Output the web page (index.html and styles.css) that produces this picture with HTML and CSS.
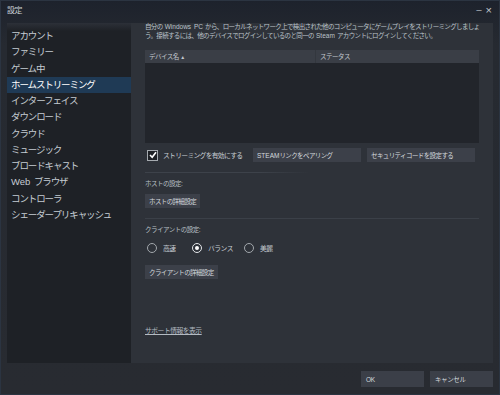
FILE: index.html
```html
<!DOCTYPE html>
<html>
<head>
  <meta charset="utf-8">
  <link rel="stylesheet" href="styles.css">
</head>
<body>
  <div class="window">
    <div class="titlebar">
      <span class="title">設定</span>
      <div class="win-controls">
        <span class="win-min">_</span>
        <span class="win-close">×</span>
      </div>
    </div>

    <div class="main">
      <ul class="nav">
        <li>アカウント</li>
        <li>ファミリー</li>
        <li>ゲーム中</li>
        <li class="active">ホームストリーミング</li>
        <li>インターフェイス</li>
        <li>ダウンロード</li>
        <li>クラウド</li>
        <li>ミュージック</li>
        <li>ブロードキャスト</li>
        <li><span class="latin">Web</span> ブラウザ</li>
        <li>コントローラ</li>
        <li>シェーダープリキャッシュ</li>
      </ul>

      <div class="panel">
        <p class="intro">自分の <span class="latin">Windows PC</span> から、ローカルネットワーク上で検出された他のコンピュータにゲームプレイをストリーミングしましょ<br>う。接続するには、他のデバイスでログインしているのと同一の <span class="latin">Steam</span> アカウントにログインしてください。</p>

        <div class="device-table">
          <div class="table-head">
            <div class="col-name">デバイス名 <span class="sort">▲</span></div>
            <div class="col-status">ステータス</div>
          </div>
          <div class="table-body"></div>
        </div>

        <div class="stream-row">
          <label class="check">
            <span class="check-box">
              <svg width="8" height="8" viewBox="0 0 8 8"><polyline points="1,4 3.2,6.3 7,1.2" fill="none" stroke="#ffffff" stroke-width="1.6"/></svg>
            </span>
            ストリーミングを有効にする
          </label>
          <button class="btn btn-wide"><span class="latin">STEAM</span>リンクをペアリング</button>
          <button class="btn btn-wide">セキュリティコードを設定する</button>
        </div>

        <div class="sep sep-short"></div>
        <div class="section-label">ホストの設定:</div>
        <button class="btn">ホストの詳細設定</button>

        <div class="sep"></div>
        <div class="section-label">クライアントの設定:</div>
        <div class="radios">
          <span class="radio radio-fast"><span class="dot"></span>高速</span>
          <span class="radio radio-balance selected"><span class="dot"></span>バランス</span>
          <span class="radio"><span class="dot"></span>美麗</span>
        </div>
        <button class="btn btn-client">クライアントの詳細設定</button>

        <a class="support">サポート情報を表示</a>
      </div>
    </div>

    <div class="footer">
      <button class="btn-dialog">OK</button>
      <button class="btn-dialog">キャンセル</button>
    </div>
  </div>
</body>
</html>
```

FILE: styles.css
```css
/* ventana de ajustes */
body {
  margin: 0;
  background: #23262c;
  font-family: "Liberation Sans", "Noto Sans CJK JP", sans-serif;
}

.window {
  width: 500px;
  height: 395px;
  box-sizing: border-box;
  background: linear-gradient(to bottom, #1d222c 0px, #262a31 45px, #282b31 100%);
  box-shadow: inset 0 0 0 1px #2b3441;
  display: flex;
  flex-direction: column;
}

/* texto latino sin el espaciado negativo de los kana */
.latin {
  letter-spacing: 0;
}

.titlebar {
  height: 23px;
  display: flex;
  align-items: flex-start;
  justify-content: space-between;
  padding: 0 8px 0 7px;
}

.title {
  font-size: 8px;
  line-height: 21px;
  color: #c9cfd5;
  letter-spacing: -0.5px;
}

.win-controls {
  display: flex;
  gap: 4px;
  color: #c3c9cf;
  line-height: 20px;
}

.win-min {
  font-size: 9px;
  margin-top: -4px;
}

.win-close {
  font-size: 11px;
}

.main {
  display: flex;
  height: 340px;
  padding: 0 7px;
}

/* menú lateral */
.nav {
  width: 124px;
  margin: 0;
  padding: 5px 0 0;
  list-style: none;
  background: linear-gradient(to bottom, #2c3038 0px, #1e2126 8px, #1e2126 100%);
}

.nav li {
  height: 16.25px;
  line-height: 16.25px;
  padding-left: 4px;
  font-size: 9.5px;
  letter-spacing: -1.1px;
  word-spacing: 2px;
  color: #c5ccd3;
  white-space: nowrap;
}

.nav li.active {
  background: #1f3a55;
  color: #ffffff;
}

/* panel derecho */
.panel {
  width: 362px;
  box-sizing: border-box;
  padding: 0 14px;
  background: #2e3239;
  display: flex;
  flex-direction: column;
  align-items: flex-start;
}

.intro {
  margin: -1px 0 0;
  font-size: 6.5px;
  line-height: 9px;
  letter-spacing: -0.65px;
  word-spacing: 1px;
  color: #bcc3ca;
  white-space: nowrap;
}

.device-table {
  width: 334px;
  margin-top: 10px;
}

.table-head {
  height: 13px;
  display: flex;
  background: #3a3e46;
  font-size: 6.5px;
  line-height: 13px;
  letter-spacing: -0.5px;
  color: #c2c8ce;
}

.col-name {
  width: 166px;
  padding-left: 4px;
  border-right: 1px solid #33373e;
}

.col-status {
  padding-left: 4px;
}

.sort {
  font-size: 5px;
}

.table-body {
  height: 80px;
  background: #22252b;
}

.stream-row {
  margin-top: 5px;
  display: flex;
  align-items: center;
  gap: 6px;
}

.check {
  width: 100px;
  margin-left: 2px;
  display: flex;
  align-items: center;
  gap: 5px;
  font-size: 6.8px;
  letter-spacing: -0.7px;
  color: #c7cdd3;
  white-space: nowrap;
}

.check-box {
  width: 9px;
  height: 9px;
  flex-shrink: 0;
  border: 1px solid #a6abb0;
  background: #1e2126;
  display: flex;
  align-items: center;
  justify-content: center;
}

.btn {
  height: 14px;
  padding: 0 4px;
  border: none;
  background: #3c4049;
  color: #d4d9de;
  font-family: inherit;
  font-size: 6.5px;
  letter-spacing: -0.6px;
  text-align: left;
  white-space: nowrap;
}

.btn-wide {
  width: 108px;
}

.sep {
  width: 334px;
  height: 1px;
  margin-top: 10px;
  background: #3b4048;
}

.sep-short {
  width: 165px;
  background: linear-gradient(to right, #3d424a 70%, rgba(61, 66, 74, 0));
}

.section-label {
  margin-top: 6px;
  margin-bottom: 6px;
  font-size: 6.5px;
  line-height: 9px;
  letter-spacing: -0.5px;
  color: #b9c0c6;
}

.radios {
  margin-top: 2px;
  margin-left: 2px;
  display: flex;
  align-items: center;
  height: 12px;
}

.radio {
  display: flex;
  align-items: center;
  gap: 6px;
  font-size: 6.8px;
  letter-spacing: -0.5px;
  color: #c7cdd3;
}

.radio-fast {
  width: 45px;
}

.radio-balance {
  width: 52px;
}

.radio .dot {
  width: 8px;
  height: 8px;
  border: 1px solid #a2a7ac;
  border-radius: 50%;
  display: flex;
  align-items: center;
  justify-content: center;
}

.radio.selected .dot {
  border-color: #e4e7ea;
}

.radio.selected .dot::after {
  content: "";
  width: 4px;
  height: 4px;
  border-radius: 50%;
  background: #ffffff;
}

.btn-client {
  margin-top: 11px;
}

.support {
  margin-top: 47px;
  font-size: 6.8px;
  line-height: 10px;
  letter-spacing: -0.5px;
  color: #b3bac2;
  text-decoration: underline;
}

/* botones inferiores */
.footer {
  flex: 1;
  display: flex;
  justify-content: flex-end;
  align-items: flex-start;
  gap: 6px;
  padding: 8px 7px 0 0;
}

.btn-dialog {
  width: 63px;
  height: 16px;
  padding: 0 5px;
  border: none;
  background: #3b3f48;
  color: #d4d9de;
  font-family: inherit;
  font-size: 6.5px;
  letter-spacing: -0.4px;
  text-align: left;
}
```
